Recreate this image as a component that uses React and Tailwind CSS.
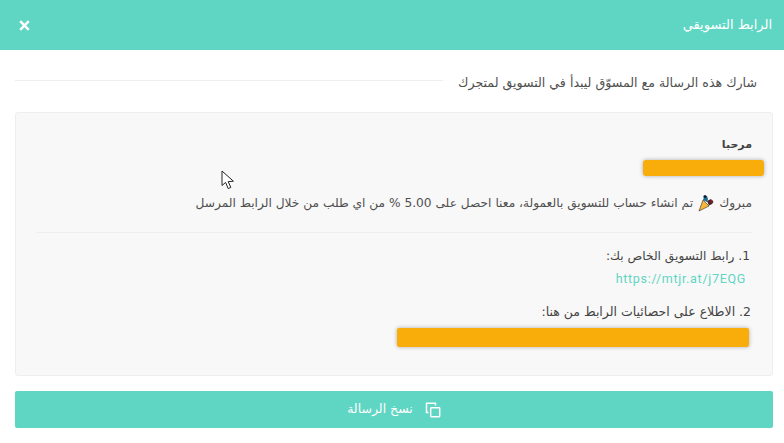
const Party = () => (
  <svg width="16" height="18" viewBox="0 0 16 18" className="mx-[5px] shrink-0">
    <path d="M1 17 L5 6 L11 12 Z" fill="#f5b83d" stroke="#3a2a10" strokeWidth="0.6" />
    <path d="M5 6 L6 3 L9 2 L10 5 L9 8 Z" fill="#1d6f8f" />
    <circle cx="7" cy="2.5" r="1.6" fill="#123" />
    <path d="M9 7 L13 5 L15.5 8 L14 10 L11 11.5 Z" fill="#4a2326" />
    <circle cx="13.5" cy="7.5" r="1.4" fill="#7a2030" />
  </svg>
);

const CopyIcon = () => (
  <svg width="16" height="16" viewBox="0 0 16 16" fill="none" stroke="white" strokeWidth="1.5">
    <rect x="5.7" y="5.7" width="9" height="9" rx="0.6" />
    <path d="M3.5 10.5 H1.5 V1.2 H10.5 V3.5" />
  </svg>
);

const Cursor = () => (
  <svg width="14" height="20" viewBox="0 0 14 20" className="absolute left-[221px] top-[170px]">
    <path d="M1 1 V15.5 L4.6 12.4 L7.2 18.6 L9.8 17.4 L7.2 11.6 L12.4 11.2 Z" fill="white" stroke="#222" strokeWidth="1" />
  </svg>
);

export default function App() {
  const ar = "font-['DejaVu_Sans',sans-serif]";
  return (
    <div dir="rtl" className={`relative w-[784px] h-[443px] overflow-hidden bg-white text-[#444] ${ar}`}>
      <header className="h-[50px] bg-[#5fd5c3] flex items-center justify-between pr-[12px] pl-[19px] text-white">
        <span className="text-[13px]">الرابط التسويقي</span>
        <svg width="11" height="11" viewBox="0 0 11 11" stroke="white" strokeWidth="2.4" fill="none">
          <path d="M1.2 1.2 L9.8 9.8 M9.8 1.2 L1.2 9.8" />
        </svg>
      </header>

      <div className="pr-[11px] pl-[15px]">
        <div className="flex items-center h-[62px] pr-[16px]">
          <span className="pt-[4px] text-[12.6px] text-[#4f4f4f] whitespace-nowrap ml-[15px]">شارك هذه الرسالة مع المسوّق ليبدأ في التسويق لمتجرك</span>
          <div className="flex-1 h-px bg-[#eee] mb-[2px]" />
        </div>

        <div className="h-[264px] bg-[#f8f8f8] border border-[#eee] rounded-[3px] pr-[8px] pl-[20px] pt-[24px]">
          <div className="font-bold text-[11px] leading-[16px] text-[#444] pr-[12px]">مرحبا</div>
          <div className="mt-[7px] w-[121px] h-[16px] bg-[#f9ad0a] rounded-[3px] shadow-[0_0_4px_rgba(0,0,0,0.3)]" />
          <div className="flex items-center mt-[16px] mr-[12px] h-[22px] text-[12.2px] text-[#4f4f4f] whitespace-nowrap">
            <span>مبروك</span>
            <Party />
            <span>تم انشاء حساب للتسويق بالعمولة، معنا احصل على 5.00 % من اي طلب من خلال الرابط المرسل</span>
          </div>
          <div className="h-px bg-[#eee] mt-[18px] mr-[12px]" />
          <div className="mt-[14px] mr-[14px] text-[12.2px] leading-[18px] text-[#444]">1. رابط التسويق الخاص بك:</div>
          <div dir="ltr" className="mt-[5px] mr-[18px] text-right font-['Roboto',sans-serif] text-[12.5px] leading-[18px] tracking-[0.7px] text-[#5fd5c3]">https://mtjr.at/j7EQG</div>
          <div className="mt-[15px] mr-[13px] text-[12.5px] leading-[18px] text-[#444]">2. الاطلاع على احصائيات الرابط من هنا:</div>
          <div className="mt-[7px] mr-[15px] w-[352px] h-[19px] bg-[#f9ad0a] rounded-[2px] shadow-[0_0_4px_rgba(0,0,0,0.3)]" />
        </div>

        <button className="mt-[15px] w-full h-[37px] bg-[#5fd5c3] text-white rounded-[2px] flex items-center justify-center gap-[12px] text-[12.5px]">
          <CopyIcon />
          <span>نسخ الرسالة</span>
        </button>
      </div>
      <Cursor />
    </div>
  );
}
